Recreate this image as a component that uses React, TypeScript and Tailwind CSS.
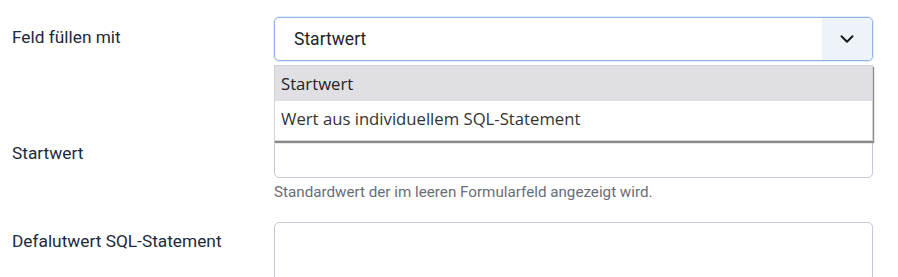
import { ChevronDown } from "lucide-react";

const labelCls =
  "w-[274px] shrink-0 pl-3 text-[17.3px] leading-[24px] text-[#1c2a3c] font-['Roboto',sans-serif]";

export default function App() {
  return (
    <div className="w-[898px] h-[277px] overflow-hidden bg-white font-['Roboto',sans-serif]">
      {/* Feld füllen mit */}
      <div className="flex pt-[17px]">
        <div className={labelCls + " pt-[8px]"}>Feld füllen mit</div>
        <div className="relative w-[599px]">
          <div className="flex h-[44px] items-center rounded-[5px] border border-[#8db4ea] bg-white shadow-[0_0_0_1px_#e6edf7]">
            <span className="flex-1 pl-[19px] text-[17.5px] text-[#22262a]">Startwert</span>
            <span className="flex h-full w-[50px] items-center justify-center rounded-r-[5px] bg-[#eef3fa]">
              <ChevronDown size={22} strokeWidth={2.2} className="text-[#1a1a1a]" />
            </span>
          </div>
          {/* open option list */}
          <div className="absolute left-0 top-[48px] z-10 w-[599px] border border-[#cfd4dc] bg-white pb-[4px] shadow-[1px_2px_1px_#8a8a8a] font-['Open_Sans',sans-serif] text-[16.7px] text-[#222]">
            <div className="flex h-[35px] items-center bg-[#e0dfe4] pl-[6px]">Startwert</div>
            <div className="flex h-[35px] items-center pl-[6px] text-[#333]">
              Wert aus individuellem SQL-Statement
            </div>
          </div>
        </div>
      </div>

      {/* Startwert */}
      <div className="mt-[73px] flex">
        <div className={labelCls + " pt-[7px]"}>Startwert</div>
        <div className="w-[599px]">
          <div className="h-[44px] rounded-[5px] border border-[#c4cbd8] bg-white" />
          <p className="mt-[4px] text-[15.2px] leading-[20px] text-[#676e78]">
            Standardwert der im leeren Formularfeld angezeigt wird.
          </p>
        </div>
      </div>

      {/* Defalutwert SQL-Statement */}
      <div className="mt-[20px] flex">
        <div className={labelCls + " pt-[7px]"}>Defalutwert SQL-Statement</div>
        <div className="w-[599px]">
          <div className="h-[80px] rounded-[5px] border border-[#c4cbd8] bg-white" />
        </div>
      </div>
    </div>
  );
}
